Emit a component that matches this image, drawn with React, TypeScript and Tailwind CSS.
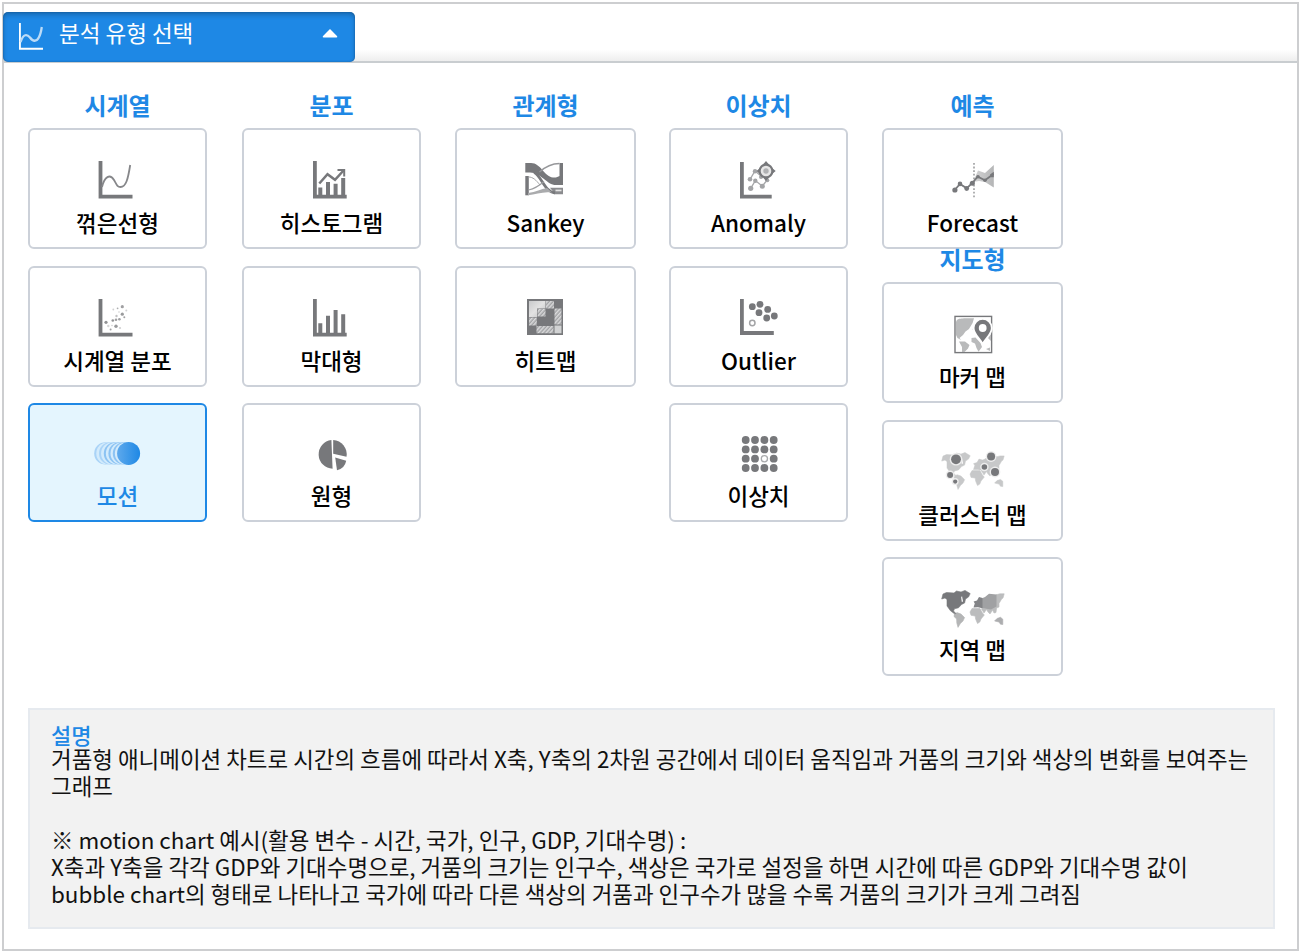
import type { ReactNode } from 'react';

const INK = '#77787b';

const Axes = ({ top = 5, bottom = 42.6, right = 50.5, left = 16.6 }) => (
  <path
    d={`M${left} ${top}h3.8V${bottom - 3.8}H${right}V${bottom}H${left}z`}
    fill={INK}
  />
);

const LineIcon = () => (
  <>
    <Axes />
    <path
      d="M20 31C22.5 20.5 28 17.5 32 24C35 29.5 35.5 31 38.5 31C44 31 46 23 48.2 9"
      fill="none"
      stroke="#86878a"
      strokeWidth="1.8"
    />
  </>
);

const scatterDots: [number, number, number, number][] = [
  [24, 28.3, 1.6, 0.8], [40.3, 12.7, 1.6, 0.7], [35.6, 14.3, 0.9, 0.6], [31.3, 15.5, 0.9, 0.35],
  [40.3, 20.2, 1.6, 0.75], [42.3, 23.3, 1, 0.7], [30.8, 26.5, 1.3, 0.8], [34, 25.8, 1.3, 0.7],
  [37.4, 25.2, 1.3, 0.7], [34, 32.3, 1.7, 0.75], [28.6, 35.5, 1, 0.7], [26.3, 32, 1.2, 0.3],
  [38, 34, 1.1, 0.35], [44.3, 16.5, 1, 0.35], [34.5, 22, 1.2, 0.45], [30, 31.5, 0.8, 0.35], [37, 18, 0.8, 0.35],
];

const ScatterIcon = () => (
  <>
    <Axes />
    {scatterDots.map(([x, y, r, o]) => (
      <circle key={`${x}-${y}`} cx={x} cy={y} r={r} fill={INK} opacity={o} />
    ))}
  </>
);

const MotionIcon = () => (
  <>
    <defs>
      <linearGradient id="motion" x1="0" x2="1">
        <stop offset="0" stopColor="#5ea9ec" />
        <stop offset="1" stopColor="#1e88e5" />
      </linearGradient>
    </defs>
    {[23.4, 28.2, 33, 37.6, 42].map((x, i) => (
      <g key={x}>
        <circle cx={x} cy="22.4" r="11.2" fill={i < 2 ? '#a9d3f7' : '#8cc3f3'} />
        <circle cx={x + 1.9} cy="22.4" r="11" fill="#d3ebfc" />
      </g>
    ))}
    <circle cx="46.6" cy="22.4" r="11.5" fill="url(#motion)" />
  </>
);

const HistogramIcon = () => (
  <>
    <Axes left={17} right={50.7} />
    <path d="M22.3 31.5h4V40h-4zM30 26h4v14h-4zM37.6 27.7h4V40h-4zM45.2 22h4v18h-4z" fill={INK} />
    <path d="M23.3 27.5L31.5 18.2L39 23.8L48 14" fill="none" stroke={INK} strokeWidth="2.5" />
    <path d="M41.5 13.9H48.2V20.5" fill="none" stroke={INK} strokeWidth="2" />
  </>
);

const BarIcon = () => (
  <>
    <Axes left={17} right={50.7} />
    <path d="M22.3 29.3h4V40h-4zM30 21.8h4V40h-4zM37.6 16h4v24h-4zM45.2 20.2h4V40h-4z" fill={INK} />
  </>
);

const PieIcon = () => (
  <g fill={INK}>
    <path d="M35.4 9A14.4 14.4 0 0 0 36.6 37.7Z" />
    <path d="M37.2 9A14.3 14.3 0 0 1 50.5 25.8L37.2 22.8Z" />
    <path d="M39.2 26.4L50.2 29.8A12 12 0 0 1 41 39.3Z" />
  </g>
);

const SankeyIcon = () => (
  <>
    <path d="M15.3 7H21C31 7 34 20.5 43 21.5C46 21.8 48 21 49.5 20V7H53V29H46C37 29 31 16.4 20 16.4H15.3Z" fill={INK} />
    <path d="M15.3 20H18.8V39.3H15.3Z" fill={INK} />
    <path d="M40 31.7H53V38.3H45Z" fill="#8a8b8e" />
    <path d="M45.5 33.6h6v1.7h-6z" fill="#e4e4e4" />
    <path d="M29.5 16C35 11 41 7.6 49.5 7.5" fill="none" stroke="#96979a" strokeWidth="1.4" />
    <path d="M24 16.5C31 19 34.5 36 45 37" fill="none" stroke={INK} strokeWidth="2.8" />
    <path d="M18.5 21C23 21 26 24 30 29" fill="none" stroke="#a4a5a7" strokeWidth="1" />
    <path d="M18.5 34C25 32.5 29 30 34 25.5" fill="none" stroke="#9c9da0" strokeWidth="1.2" />
    <path d="M18 37C26 36 31 33 37 32L42 36.6C34 35 26 38.5 18 39.3Z" fill="#aaabad" />
  </>
);

const HeatmapIcon = () => (
  <>
    <defs>
      <linearGradient id="heat" x1="0" y1="0" x2="1" y2="1">
        <stop offset="0" stopColor="#c9cacb" />
        <stop offset=".5" stopColor="#e2e2e2" />
        <stop offset="1" stopColor="#bebfc0" />
      </linearGradient>
      <pattern id="hatch" width="2.9" height="2.9" patternUnits="userSpaceOnUse" patternTransform="rotate(42)">
        <rect width="2.9" height="2.9" fill="#a3a4a6" />
        <rect width="1.4" height="2.9" fill="#dcdcdd" />
      </pattern>
    </defs>
    <rect x="17" y="5" width="36" height="36" fill={INK} />
    <path d="M19 7h16.5v7.5h-8.5v8.5h-8z" fill="url(#heat)" />
    <path d="M36 7h8v7.5h-8zM27.5 15h8v7.5h-8zM19 23.5h7.8v8H19zM44.5 14.5h7v16h-7zM26.5 32h17v7.3h-17z" fill="url(#hatch)" />
    <path d="M44.5 31.5h7v7.8h-7z" fill="#d1d2d3" />
  </>
);

const AnomalyIcon = () => (
  <>
    <Axes top={6} left={17} right={48.7} />
    <g stroke="#a7a8aa" strokeWidth="1.3" fill="none">
      <path d="M27 23.3L32 15L38 20" />
      <path d="M27.7 32.3L32.3 24.6L39.3 30L44.3 24" />
    </g>
    <g fill="#a3a4a6">
      <circle cx="27" cy="23.3" r="2.3" />
      <circle cx="32" cy="15.2" r="2.2" />
      <circle cx="38" cy="21" r="2" />
      <circle cx="27.7" cy="32.3" r="2.6" />
      <circle cx="32.3" cy="24.8" r="2.2" />
      <circle cx="39.3" cy="30.2" r="2.5" />
      <circle cx="44.3" cy="24.3" r="2" />
    </g>
    <path d="M43 5l3 3.5h-6zM43 25l3-3.5h-6zM33.5 15l3.5-3v6zM52.7 15l-3.6-3v6z" fill={INK} />
    <circle cx="43" cy="15" r="6.4" fill="#e6e6e6" stroke={INK} strokeWidth="2.2" />
    <circle cx="43" cy="15" r="2.7" fill="#b0b1b3" />
  </>
);

const outlierDots = [[29.3, 12.7], [37, 10.3], [44.7, 15.4], [36, 18.7], [43.7, 24], [51.3, 22]];

const OutlierIcon = () => (
  <>
    <Axes left={17} bottom={40.9} right={50.8} />
    {outlierDots.map(([x, y]) => (
      <circle key={x} cx={x} cy={y} r="3.4" fill={INK} />
    ))}
    <circle cx="29.3" cy="29" r="2.7" fill="none" stroke="#a3a4a6" strokeWidth="1.5" />
  </>
);

const DotGridIcon = () => (
  <>
    {[9, 18.4, 27.7, 37].map((y, row) =>
      [22.7, 32, 41.4, 50.7].map((x, col) =>
        row === 2 && col === 2 ? (
          <circle key={x} cx={x} cy={y} r="3.1" fill="#fff" stroke="#aaabad" strokeWidth="1.3" />
        ) : (
          <circle key={`${x}-${y}`} cx={x} cy={y} r="3.9" fill={INK} />
        ),
      ),
    )}
  </>
);

const ForecastIcon = () => (
  <>
    <defs>
      <linearGradient id="cone" x1="0" x2="1">
        <stop offset="0" stopColor="#d5d5d6" />
        <stop offset="1" stopColor="#b4b5b6" />
      </linearGradient>
    </defs>
    <path d="M36 26L41 14.5L48 17L56.8 9V31.5L48 26L42 25Z" fill="url(#cone)" />
    <path d="M37 7V43" stroke="#8f9092" strokeWidth="1.4" strokeDasharray="1.8 1.8" />
    <path d="M17.7 34L23 28L29.7 32.3L35.3 27L40.7 20.7L48 24.3L56.6 18" fill="none" stroke={INK} strokeWidth="1.8" />
    <g fill={INK}>
      <circle cx="17.9" cy="34" r="2.6" />
      <circle cx="23" cy="27.9" r="2.3" />
      <circle cx="29.7" cy="32.5" r="2.4" />
      <circle cx="35.3" cy="27.2" r="2.5" />
      <circle cx="41" cy="20.7" r="1.8" />
      <circle cx="48" cy="24.3" r="1.8" />
      <path d="M53 18.5l3.8-2.8v5.5h-3z" />
    </g>
  </>
);

const MarkerMapIcon = () => (
  <>
    <rect x="18" y="6.4" width="36.6" height="36.2" fill="#fff" stroke={INK} strokeWidth="1.4" />
    <g fill="#b9babb">
      <path d="M19 12C20 8 24 9 27 8.3H37L35.6 13L32 19L28.5 21.5L26 25L22.5 28L24 30L20.5 28L19 25Z" />
      <path d="M22 31.5L28 31.5L32.5 35L31 38.5L27.5 42H25L25 37Z" />
      <path d="M34.5 28L38.5 27.5L43.5 33L45 37L41.5 41.8L39.5 38L38 33.5L34.5 32Z" />
      <path d="M51 28L54 24V31ZM35.5 19.5L37.5 15.5L38.5 21ZM49 39l4-1.5v3.5z" />
    </g>
    <path d="M45.7 34C43 28 36.6 24.5 36.6 18A9.1 9.1 0 0 1 54.8 18C54.8 24.5 48.4 28 45.7 34Z" fill={INK} stroke="#fff" strokeWidth="1.8" />
    <circle cx="45.7" cy="18" r="3.9" fill="#fff" />
  </>
);

const NORTH_AMERICA =
  'M4.7 14L6 9L9.5 7.5L17 8L19.5 6L24 7L28 5.4L33.2 8.6L31.5 12L28.5 14L27.6 18L24.5 19.5L21.5 22.8L17.5 23.8L16.5 26L19 28.5L17.5 28.8L13.5 25.8L10 21V14.5L8 13Z';
const GREENLAND_GAP = 'M24.2 12.5L25 11L26 16.5L24.8 17Z';
const SOUTH_AMERICA = 'M17.3 29.5L20 27.6L24 29L27.6 32.6L26 36L23.4 38.5L21 42.4L19.8 38L19.6 34L17 31.5Z';
const AFRICA = 'M35 23.5L43 23.5L45.5 28L47.3 30L44 34L42.8 37L40.5 38.5L38.6 34L38.2 31L34 30.3L33 27Z';
const EUROPE = 'M36.5 22.5L37.8 18.5L36.6 16.5L40 15.5L42 12L45.5 13V23.3L41 22.3Z';
const ASIA = 'M44.5 13.5L48 12L52 8.7L59.5 9.6V21.5L54 24.5L48 23.5L44.5 23.6Z';
const FAR_EAST =
  'M59 9.8L63 8.8L67.2 8.8L66 13L64.6 14L62 18.5L62 22L59.6 23L59 27.5L57 28L55.6 25L53 29L51 27L49.5 24.5L47 28L44.5 24L59 21Z';
const AUSTRALIA = 'M57.6 36L60 33.5L63.5 32.3L65.8 34.2L65.8 39.5L63.5 39.2L62 37Z';

const RegionMapIcon = () => (
  <g strokeWidth=".6" strokeLinejoin="round">
    <path d={FAR_EAST} fill="#bcbdbe" stroke="#bcbdbe" />
    <path d={AFRICA} fill="#bbbcbd" stroke="#bbbcbd" />
    <path d={SOUTH_AMERICA} fill="#b4b5b6" stroke="#b4b5b6" />
    <path d={AUSTRALIA} fill="#acadaf" stroke="#acadaf" />
    <path d={ASIA} fill="#a0a1a3" />
    <path d={EUROPE} fill="#828386" />
    <path d={NORTH_AMERICA} fill={INK} stroke={INK} />
    <path d={GREENLAND_GAP} fill="#fff" />
  </g>
);

const clusters: [number, number, number][] = [
  [19, 11.3, 4.9], [13.1, 26.9, 3], [18.2, 33.6, 2.1], [54.1, 8.5, 4], [47.4, 19, 2.8], [58, 24, 4],
];

const ClusterMapIcon = () => (
  <>
    <g fill="#c7c8c9" stroke="#c7c8c9" strokeWidth=".5" transform="translate(0 -.9)">
      <path d={FAR_EAST} />
      <path d={AFRICA} />
      <path d={SOUTH_AMERICA} />
      <path d={AUSTRALIA} />
      <path d={ASIA} />
      <path d={EUROPE} />
      <path d={NORTH_AMERICA} />
      <path d={GREENLAND_GAP} fill="#fff" stroke="none" />
    </g>
    {clusters.map(([x, y, r]) => (
      <g key={x}>
        <circle cx={x} cy={y} r={r + 1.4} fill="#ededed" />
        <circle cx={x} cy={y} r={r} fill={INK} />
      </g>
    ))}
  </>
);

type CardProps = { label: string; icon: ReactNode; active?: boolean; short?: boolean };

const Card = ({ label, icon, active, short }: CardProps) => (
  <button
    type="button"
    className={`flex w-full flex-col items-center rounded-[6px] border-2 pt-[26px] ${
      short ? 'h-[119px]' : 'h-[121px]'
    } ${active ? 'border-[#1e88e5] bg-[#e4f5fe] text-[#1e88e5]' : 'border-[#ccd1d9] bg-white text-black'}`}
  >
    <svg width="71" height="48" viewBox="0 0 71 48" className="shrink-0">
      {icon}
    </svg>
    <span className={`text-[22.5px] leading-[32px] font-medium whitespace-nowrap ${short ? 'mt-0' : 'mt-[2px]'}`}>{label}</span>
  </button>
);

const Title = ({ children }: { children: ReactNode }) => (
  <h2 className="h-[33px] text-center text-[24px] leading-[20px] font-bold text-[#1e88e5]">{children}</h2>
);

const Group = ({ title, cards }: { title: string; cards: CardProps[] }) => (
  <section>
    <Title>{title}</Title>
    <div className="flex flex-col gap-[16.5px]">
      {cards.map((card) => (
        <Card key={card.label} {...card} />
      ))}
    </div>
  </section>
);

export default function App() {
  return (
    <div className="h-[952px] w-[1300px] bg-white pt-[2px] pr-[1px] pb-[1px] pl-[2px] font-['Noto_Sans_CJK_KR',sans-serif] text-black">
      <div className="flex h-[949px] flex-col border-2 border-[#cdced0]">
        <header className="h-[59px] border-b-2 border-[#c9cdd0] bg-linear-to-b from-white from-80% to-[#eeeeee] pt-[7.5px]">
          <button
            type="button"
            className="-ml-px flex h-[50px] w-[351.5px] items-center rounded-[5px] bg-[#1e88e5] pr-[16.5px] pl-[16px] text-white shadow-[inset_0_3px_5px_rgba(0,0,0,0.22),inset_0_0_2px_rgba(0,0,0,0.3)]"
          >
            <svg width="25" height="29" viewBox="0 0 25 29" className="shrink-0">
              <path d="M.9 1V26.8H24" fill="none" stroke="#fff" strokeWidth="1.9" />
              <path d="M1.5 20C4.5 11.5 8 12 11 15.5C14 19.8 17.5 19.8 19.8 15.5C21.5 12.5 22.2 9 22.8 5" fill="none" stroke="#bcdbf7" strokeWidth="2.3" />
            </svg>
            <span className="-mt-[9px] ml-[15px] text-[22.5px] leading-[32px] whitespace-nowrap">분석 유형 선택</span>
            <svg width="16" height="9" viewBox="0 0 16 9" className="-mt-[6px] ml-auto">
              <path d="M8 0L15.2 7.3Q15.6 8.6 14.4 8.6H1.6Q.4 8.6 .8 7.3Z" fill="#fff" />
            </svg>
          </button>
        </header>

        <main className="grow px-[24px] pt-[32px]">
          <div className="flex h-[612.5px]">
            <div className="mr-[35px] w-[179px]">
              <Group
                title="시계열"
                cards={[
                  { label: '꺾은선형', icon: <LineIcon /> },
                  { label: '시계열 분포', icon: <ScatterIcon /> },
                  { label: '모션', icon: <MotionIcon />, active: true, short: true },
                ]}
              />
            </div>
            <div className="mr-[34px] w-[179px]">
              <Group
                title="분포"
                cards={[
                  { label: '히스토그램', icon: <HistogramIcon /> },
                  { label: '막대형', icon: <BarIcon /> },
                  { label: '원형', icon: <PieIcon />, short: true },
                ]}
              />
            </div>
            <div className="mr-[33px] w-[181px]">
              <Group
                title="관계형"
                cards={[
                  { label: 'Sankey', icon: <SankeyIcon /> },
                  { label: '히트맵', icon: <HeatmapIcon /> },
                ]}
              />
            </div>
            <div className="mr-[34px] w-[179px]">
              <Group
                title="이상치"
                cards={[
                  { label: 'Anomaly', icon: <AnomalyIcon /> },
                  { label: 'Outlier', icon: <OutlierIcon /> },
                  { label: '이상치', icon: <DotGridIcon />, short: true },
                ]}
              />
            </div>
            <div className="w-[181px]">
              <Group title="예측" cards={[{ label: 'Forecast', icon: <ForecastIcon /> }]} />
              <Group
                title="지도형"
                cards={[
                  { label: '마커 맵', icon: <MarkerMapIcon /> },
                  { label: '클러스터 맵', icon: <ClusterMapIcon /> },
                  { label: '지역 맵', icon: <RegionMapIcon />, short: true },
                ]}
              />
            </div>
          </div>

          <section className="h-[221px] w-[1247px] border-2 border-[#e6eaef] bg-[#f2f2f2] pt-[11px] pl-[21px] text-[22.45px] leading-[27px] text-[#111]">
            <h3 className="h-[24px] text-[22px] font-medium text-[#1e88e5]">설명</h3>
            <p className="whitespace-nowrap">
              거품형 애니메이션 차트로 시간의 흐름에 따라서 X축, Y축의 2차원 공간에서 데이터 움직임과 거품의 크기와 색상의 변화를 보여주는
              <br />
              그래프
            </p>
            <p className="mt-[27px] whitespace-nowrap">
              ※ motion chart 예시(활용 변수 - 시간, 국가, 인구, GDP, 기대수명) :
              <br />
              X축과 Y축을 각각 GDP와 기대수명으로, 거품의 크기는 인구수, 색상은 국가로 설정을 하면 시간에 따른 GDP와 기대수명 값이
              <br />
              bubble chart의 형태로 나타나고 국가에 따라 다른 색상의 거품과 인구수가 많을 수록 거품의 크기가 크게 그려짐
            </p>
          </section>
        </main>
      </div>
    </div>
  );
}
